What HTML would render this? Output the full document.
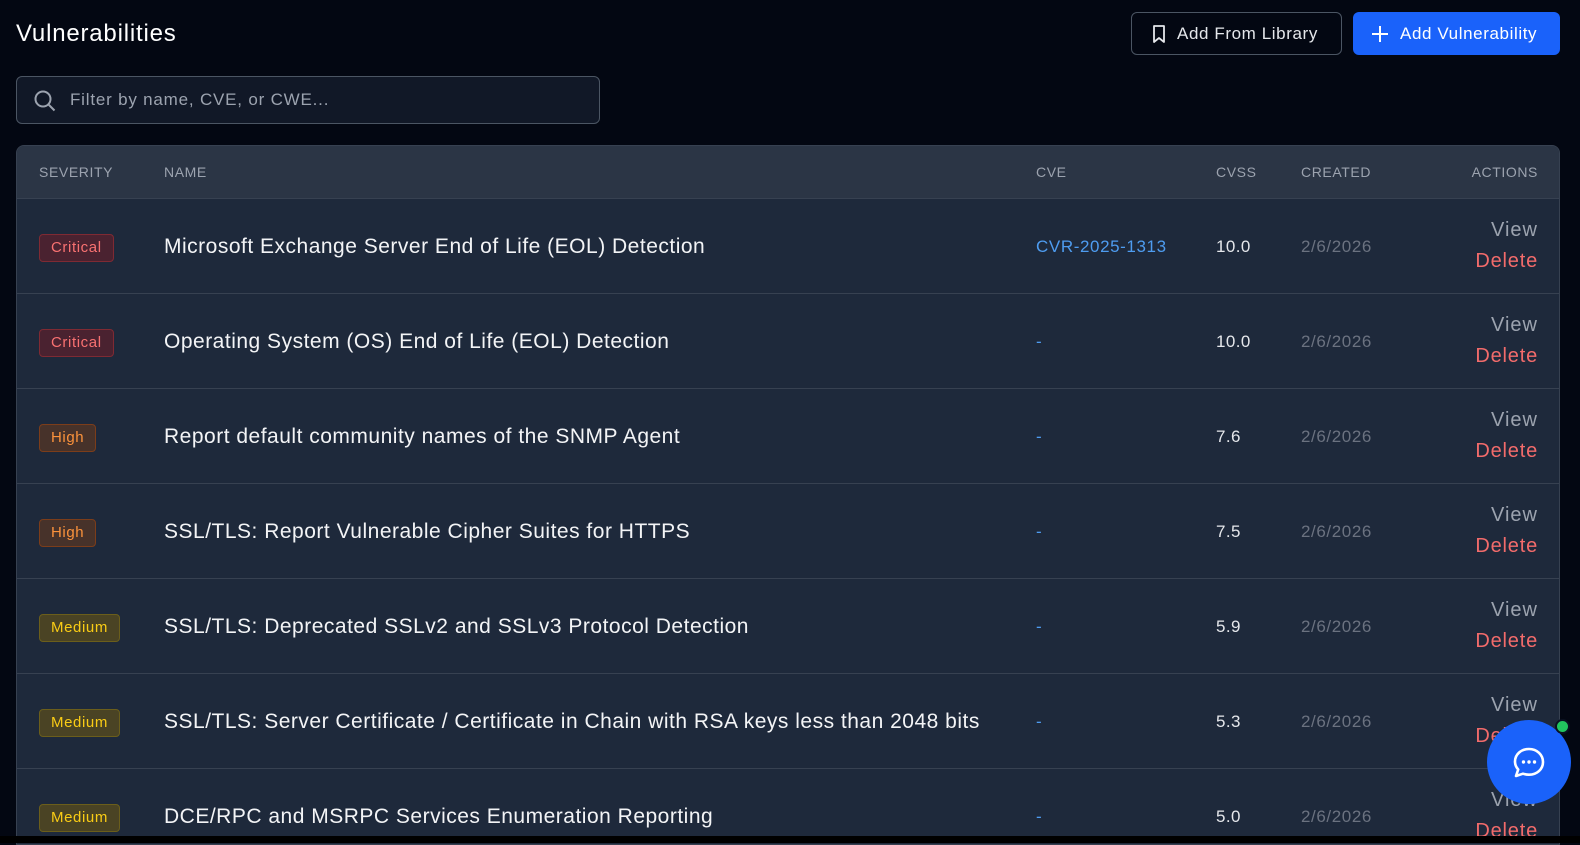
<!DOCTYPE html>
<html><head><meta charset="utf-8"><style>
*{box-sizing:border-box;margin:0;padding:0}
body{width:1580px;height:843px;overflow:hidden;background:#030712;font-family:"Liberation Sans",sans-serif;position:relative}
.title{position:absolute;left:16px;top:20px;color:#fff;font-size:24px;letter-spacing:0.8px}
.btn{position:absolute;top:12px;height:43px;border-radius:6px;display:flex;align-items:center;font-size:17px;letter-spacing:0.6px;color:#e5e7eb}
.b1{left:1131px;width:211px;border:1px solid #4b5563;padding-left:18px}
.b2{left:1353px;width:207px;background:#1a62fa;color:#fff;padding-left:18px}
.search{position:absolute;left:16px;top:76px;width:584px;height:48px;border:1px solid #4b5563;border-radius:6px;background:#111827;color:#9ca3af;font-size:17px;letter-spacing:0.8px;padding-left:53px;line-height:46px}
.search svg{position:absolute;left:17px;top:13px}
.table{position:absolute;left:16px;top:145px;width:1544px;height:700px;background:#1f2937;border:1px solid #374151;border-radius:8px 8px 0 0;overflow:hidden}
.head{height:52px;background:#2b3545;position:relative;color:#9ca3af;font-size:14px;letter-spacing:0.6px}
.head span,.row span{position:absolute}
.head span{top:18px}
.row{height:95px;border-top:1px solid #374151;position:relative;background:#1e293b}
.row:first-of-type{border-top:none}
.badge{left:22px;top:35px;height:28px;line-height:26px;border-radius:4px;padding:0 11px;font-size:15px;letter-spacing:0.6px;border:1px solid}
.crit{background:#4a2230;color:#f87171;border-color:#7f2a33}
.high{background:#47322a;color:#fb923c;border-color:#7c3d1a}
.med{background:#4a4324;color:#facc15;border-color:#6b5e1b}
.name{left:147px;top:36px;color:#f3f4f6;font-size:21px;letter-spacing:0.5px}
.cve{left:1019px;top:38px;color:#4e9cf0;font-size:17px;letter-spacing:0.6px}
.cvss{left:1199px;top:38px;color:#e5e7eb;font-size:17px;letter-spacing:0.4px}
.date{left:1284px;top:38px;color:#6b7280;font-size:17px;letter-spacing:0.6px}
.view{right:21px;top:20px;color:#9ca3af;font-size:20px;letter-spacing:1px}
.del{right:21px;top:51px;color:#f26b6b;font-size:20px;letter-spacing:0.8px}
.chat{position:absolute;left:1487px;top:720px;width:84px;height:84px;border-radius:50%;background:#1a62fa}
.dot{position:absolute;left:1555px;top:719px;width:15px;height:15px;border-radius:50%;background:#22c55e;border:2px solid #0b1120}
.bottom{position:absolute;left:0;top:836px;width:1580px;height:7px;background:#000}
</style></head><body>
<div class="title">Vulnerabilities</div>
<div class="btn b1"><svg width="18" height="20" viewBox="0 0 18 20" style="margin-right:9px"><path d="M4 2h10v16l-5-4-5 4z" fill="none" stroke="#e5e7eb" stroke-width="1.8" stroke-linejoin="round"/></svg>Add From Library</div>
<div class="btn b2"><svg width="18" height="18" viewBox="0 0 18 18" style="margin-right:11px"><path d="M9 1v16M1 9h16" stroke="#fff" stroke-width="2"/></svg>Add Vulnerability</div>
<div class="search"><svg width="22" height="22" viewBox="0 0 22 22"><circle cx="9" cy="9" r="7.5" fill="none" stroke="#9ca3af" stroke-width="2"/><path d="M14.5 14.5l6 6" stroke="#9ca3af" stroke-width="2"/></svg>Filter by name, CVE, or CWE...</div>
<div class="table">
<div class="head"><span style="left:22px">SEVERITY</span><span style="left:147px">NAME</span><span style="left:1019px">CVE</span><span style="left:1199px">CVSS</span><span style="left:1284px">CREATED</span><span style="right:21px">ACTIONS</span></div>
<div class="row"><span class="badge crit">Critical</span><span class="name">Microsoft Exchange Server End of Life (EOL) Detection</span><span class="cve">CVR-2025-1313</span><span class="cvss">10.0</span><span class="date">2/6/2026</span><span class="view">View</span><span class="del">Delete</span></div>
<div class="row"><span class="badge crit">Critical</span><span class="name">Operating System (OS) End of Life (EOL) Detection</span><span class="cve">-</span><span class="cvss">10.0</span><span class="date">2/6/2026</span><span class="view">View</span><span class="del">Delete</span></div>
<div class="row"><span class="badge high">High</span><span class="name">Report default community names of the SNMP Agent</span><span class="cve">-</span><span class="cvss">7.6</span><span class="date">2/6/2026</span><span class="view">View</span><span class="del">Delete</span></div>
<div class="row"><span class="badge high">High</span><span class="name">SSL/TLS: Report Vulnerable Cipher Suites for HTTPS</span><span class="cve">-</span><span class="cvss">7.5</span><span class="date">2/6/2026</span><span class="view">View</span><span class="del">Delete</span></div>
<div class="row"><span class="badge med">Medium</span><span class="name">SSL/TLS: Deprecated SSLv2 and SSLv3 Protocol Detection</span><span class="cve">-</span><span class="cvss">5.9</span><span class="date">2/6/2026</span><span class="view">View</span><span class="del">Delete</span></div>
<div class="row"><span class="badge med">Medium</span><span class="name">SSL/TLS: Server Certificate / Certificate in Chain with RSA keys less than 2048 bits</span><span class="cve">-</span><span class="cvss">5.3</span><span class="date">2/6/2026</span><span class="view">View</span><span class="del">Delete</span></div>
<div class="row"><span class="badge med">Medium</span><span class="name">DCE/RPC and MSRPC Services Enumeration Reporting</span><span class="cve">-</span><span class="cvss">5.0</span><span class="date">2/6/2026</span><span class="view">View</span><span class="del">Delete</span></div>
</div>
<div class="chat"><svg width="84" height="84" viewBox="0 0 84 84"><path d="M42 29c-8 0-14 5.5-14 12.5 0 3 1.2 5.8 3.2 8L29 56l7-2.3c1.9.7 3.900 1 6 1 8 0 14-5.5 14-12.700S50 29 42 29z" fill="none" stroke="#fff" stroke-width="2.6" stroke-linejoin="round"/><circle cx="36.5" cy="42" r="1.7" fill="#fff"/><circle cx="42" cy="42" r="1.7" fill="#fff"/><circle cx="47.5" cy="42" r="1.7" fill="#fff"/></svg></div>
<div class="dot"></div>
<div class="bottom"></div>
</body></html>
